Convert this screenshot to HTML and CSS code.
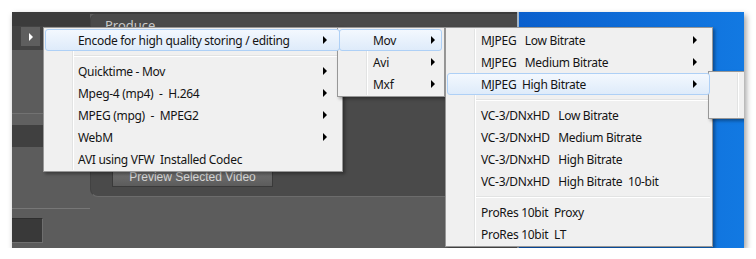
FILE: index.html
```html
<!DOCTYPE html>
<html lang="en">
<head>
    <meta charset="UTF-8">
    <title>Produce - Encode menu</title>
    <link rel="stylesheet" href="styles.css">
</head>
<body>
    <div class="shot">
        <div class="app">
            <aside class="side">
                <div class="side-top"></div>
                <div class="side-head"><span class="expand"></span></div>
                <div class="side-fill h63"></div>
                <div class="side-band"></div>
                <div class="side-dark h22"></div>
                <div class="side-fill h61"></div>
                <div class="side-line"></div>
                <div class="side-fill h9"></div>
                <div class="side-box"></div>
                <div class="side-fill grow"></div>
            </aside>

            <section class="produce">
                <div class="panel">
                    <div class="panel-title">Produce</div>
                    <div class="panel-body">
                        <button class="preview">Preview Selected Video</button>
                    </div>
                </div>
            </section>

            <div class="desk"></div>
        </div>

        <!-- cascading encode menus -->
        <div class="menu m1">
            <div class="item on">Encode for high quality storing / editing<span class="arrow"></span></div>
            <div class="sep"></div>
            <div class="item">Quicktime - Mov<span class="arrow"></span></div>
            <div class="item">Mpeg-4 (mp4)  -  H.264<span class="arrow"></span></div>
            <div class="item">MPEG (mpg)  -  MPEG2<span class="arrow"></span></div>
            <div class="item">WebM<span class="arrow"></span></div>
            <div class="item">AVI using VFW  Installed Codec</div>
        </div>

        <div class="menu m2">
            <div class="item on">Mov<span class="arrow"></span></div>
            <div class="item">Avi<span class="arrow"></span></div>
            <div class="item">Mxf<span class="arrow"></span></div>
        </div>

        <div class="menu m3">
            <div class="item">MJPEG   Low Bitrate<span class="arrow"></span></div>
            <div class="item">MJPEG   Medium Bitrate<span class="arrow"></span></div>
            <div class="item on">MJPEG  High Bitrate<span class="arrow"></span></div>
            <div class="sep"></div>
            <div class="item">VC-3/DNxHD   Low Bitrate</div>
            <div class="item">VC-3/DNxHD   Medium Bitrate</div>
            <div class="item">VC-3/DNxHD   High Bitrate</div>
            <div class="item">VC-3/DNxHD   High Bitrate  10-bit</div>
            <div class="sep"></div>
            <div class="item">ProRes 10bit  Proxy</div>
            <div class="item">ProRes 10bit  LT</div>
        </div>

        <div class="menu m4">
            <div class="item"></div>
            <div class="item"></div>
        </div>
    </div>
</body>
</html>
```

FILE: styles.css
```css
:root {
    --menu-bg: #f0f0f0;
    --menu-border: #979797;
    --gutter: #e2e3e3;
    --dark: #3b3b3b;
    --gray: #5c5c5c;
}

* {
    box-sizing: border-box;
    margin: 0;
    padding: 0;
}

body {
    background: #ffffff;
    font-family: 'Noto Sans', sans-serif;
}

.shot {
    position: relative;
    margin: 12px 0 0 12px;
    width: 732px;
    height: 236px;
    overflow: hidden;
    box-shadow: 2px 3px 6px rgba(0, 0, 0, 0.4);
}

.app {
    display: flex;
    height: 100%;
    background: var(--gray);
}

/* left tool column */
.side {
    width: 78px;
    display: flex;
    flex-direction: column;
}

.side-top {
    height: 14px;
    background: var(--dark);
}

.side-head {
    height: 24px;
    background: #434343;
    display: flex;
    padding: 1px 0 0 9px;
}

.expand {
    width: 19px;
    height: 19px;
    background: #5e5e5e;
    display: flex;
    align-items: center;
    justify-content: center;
}

.expand::after {
    content: '';
    border-left: 4px solid #ffffff;
    border-top: 4px solid transparent;
    border-bottom: 4px solid transparent;
}

.side-fill {
    background: var(--gray);
}

.h63 { height: 63px; }
.h61 { height: 61px; }
.h9 { height: 9px; }
.h22 { height: 22px; }
.grow { flex: 1; }

.side-band {
    height: 12px;
    background: #606060;
    border-top: 1px solid #727272;
}

.side-dark {
    background: #404040;
}

.side-line {
    height: 1px;
    background: #777777;
}

.side-box {
    height: 25px;
    width: 31px;
    background: #393939;
    border-top: 1px solid #2e2e2e;
    border-right: 1px solid #6e6e6e;
    border-bottom: 1px solid #707070;
}

/* produce panel */
.produce {
    width: 427px;
    border-top: 2px solid var(--dark);
}

.panel {
    height: 183px;
    background: #4a4a4a;
    border-radius: 6px 0 0 8px;
    border-bottom: 1px solid #6c6c6c;
    border-left: 1px solid #424242;
}

.panel-title {
    padding: 2px 0 0 14px;
    font-size: 13px;
    color: #c9c9c9;
    height: 20px;
}

.panel-body {
    padding: 130px 0 0 21px;
}

.preview {
    width: 161px;
    height: 20px;
    border: 1px solid #3a3a3a;
    background: linear-gradient(#747474, #5c5c5c);
    color: #d6d6d6;
    font-family: 'Liberation Sans', Arial, sans-serif;
    font-size: 12px;
}

.desk {
    flex: 1;
    border-left: 2px solid #a4b6c8;
    background: linear-gradient(90deg, #0a5fcd, #1279e2);
}

/* windows style popup menus */
.menu {
    position: absolute;
    background: var(--menu-bg);
    border: 1px solid var(--menu-border);
    padding: 1px 2px 1px 1px;
    box-shadow: 2px 2px 3px rgba(0, 0, 0, 0.35);
    font-size: 12px;
    letter-spacing: -0.3px;
    color: #141414;
}

.menu::before {
    content: '';
    position: absolute;
    left: 28px;
    top: 1px;
    bottom: 1px;
    width: 1px;
    background: var(--gutter);
    border-right: 1px solid #ffffff;
    box-sizing: content-box;
}

.m1 { left: 31px; top: 15px; width: 300px; }
.m2 { left: 325px; top: 15px; width: 108px; }
.m3 { left: 433px; top: 15px; width: 268px; }
.m4 { left: 696px; top: 59px; width: 60px; }

.item {
    position: relative;
    z-index: 1;
    display: flex;
    align-items: center;
    height: 22px;
    padding: 0 12px 0 32px;
    border: 1px solid transparent;
    border-radius: 3px;
    white-space: pre;
}

.item.on {
    background: linear-gradient(#f3f8fe, #deebfa);
    border-color: #aed0f6;
}

.m2 .item { padding-left: 33px; padding-right: 6px; }
.m3 .item { padding-left: 33px; }

.arrow {
    margin-left: auto;
    border-left: 4px solid #000000;
    border-top: 4px solid transparent;
    border-bottom: 4px solid transparent;
}

.sep {
    height: 9px;
    margin-left: 29px;
    display: flex;
    flex-direction: column;
    justify-content: center;
}

.sep::before {
    content: '';
    height: 1px;
    background: var(--gutter);
    border-bottom: 1px solid #ffffff;
    box-sizing: content-box;
}
```
